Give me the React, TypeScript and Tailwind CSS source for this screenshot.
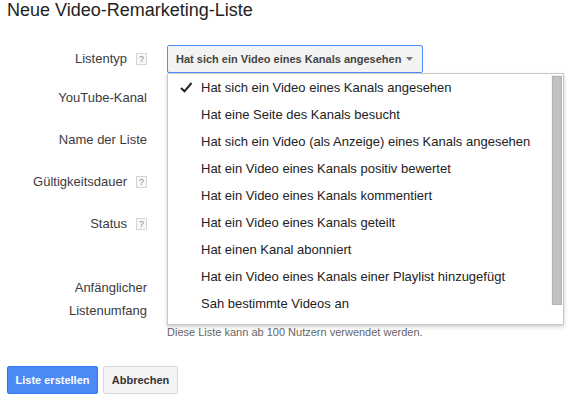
import React from "react";

const items = [
  "Hat sich ein Video eines Kanals angesehen",
  "Hat eine Seite des Kanals besucht",
  "Hat sich ein Video (als Anzeige) eines Kanals angesehen",
  "Hat ein Video eines Kanals positiv bewertet",
  "Hat ein Video eines Kanals kommentiert",
  "Hat ein Video eines Kanals geteilt",
  "Hat einen Kanal abonniert",
  "Hat ein Video eines Kanals einer Playlist hinzugefügt",
  "Sah bestimmte Videos an",
];

function Help() {
  return (
    <span className="ml-[9px] inline-flex h-[12px] w-[11px] items-center justify-center border border-[#d6d6d6] bg-[#f8f8f8] text-[9px] leading-none text-[#888]">
      ?
    </span>
  );
}

function Label({ text, help }: { text: string; help?: boolean }) {
  return (
    <div className="flex w-[147px] shrink-0 items-center justify-end text-[13px] leading-[16px] text-[#3c3c3c]">
      <span>{text}</span>
      {help && <Help />}
    </div>
  );
}

export default function App() {
  return (
    <div
      className="h-[400px] w-[573px] overflow-hidden bg-white px-[7px]"
      style={{ fontFamily: '"Liberation Sans", Arial, sans-serif' }}
    >
      <h1 className="text-[18px] leading-[20px] text-[#222]">Neue Video-Remarketing-Liste</h1>

      {/* Row 1 */}
      <div className="mt-[25px] flex h-[28px] items-center">
        <div className="-ml-[7px] flex">
          <Label text="Listentyp" help />
        </div>
        <div className="relative ml-[20px]">
          <div className="flex h-[28px] w-[256px] items-center justify-between rounded-[2px] border border-[#4d90fe] bg-[#f3f3f3] pl-[8px] pr-[8px] text-[11px] font-bold text-[#444]">
            <span>Hat sich ein Video eines Kanals angesehen</span>
            <svg width="7" height="4" viewBox="0 0 7 4" className="mr-[1px]">
              <path d="M0 0 L7 0 L3.5 4 Z" fill="#777" />
            </svg>
          </div>
          <div className="absolute left-0 top-[28px] z-10 h-[252px] w-[397px] border border-[#c8c8c8] bg-white pb-[7px] shadow-[0_2px_4px_rgba(0,0,0,0.2)]">
            {items.map((t, i) => (
              <div
                key={t}
                className="relative flex h-[27px] items-center pl-[33px] text-[13px] text-[#222]"
              >
                {i === 0 && (
                  <svg
                    width="13"
                    height="11"
                    viewBox="0 0 13 11"
                    className="absolute left-[12px] top-[8px]"
                  >
                    <path d="M1 6 L4.5 9.3 L11.5 1" fill="none" stroke="#222" strokeWidth="2" />
                  </svg>
                )}
                {t}
              </div>
            ))}
            <div className="absolute right-[1px] top-[1px] h-[230px] w-[11px] bg-[#f4f4f4] pl-[1px]">
              <div className="mt-[1px] h-[229px] w-[10px] border border-[#b3b3b3] bg-[#c1c1c1]" />
            </div>
          </div>
        </div>
      </div>

      {/* Labels */}
      <div className="-ml-[7px] mt-[17px] flex h-[16px]">
        <Label text="YouTube-Kanal" />
      </div>
      <div className="-ml-[7px] mt-[26px] flex h-[16px]">
        <Label text="Name der Liste" />
      </div>
      <div className="-ml-[7px] mt-[26px] flex h-[16px]">
        <Label text="Gültigkeitsdauer" help />
      </div>
      <div className="-ml-[7px] mt-[26px] flex h-[16px]">
        <Label text="Status" help />
      </div>
      <div className="-ml-[7px] mt-[44px] flex">
        <div className="w-[147px] shrink-0 text-right text-[13px] leading-[23px] text-[#3c3c3c]">
          Anfänglicher
          <br />
          Listenumfang
        </div>
        <div className="ml-[20px] pt-[49px] text-[11px] leading-[14px] text-[#666]">
          Diese Liste kann ab 100 Nutzern verwendet werden.
        </div>
      </div>

      {/* Buttons */}
      <div className="mt-[27px] flex gap-[5px]">
        <button className="h-[28px] w-[91px] rounded-[2px] border border-[#3079ed] bg-[#4a8af4] text-[11px] font-bold text-white">
          Liste erstellen
        </button>
        <button className="h-[28px] w-[75px] rounded-[2px] border border-[#d9d9d9] bg-[#f4f4f4] text-[11px] font-bold text-[#333]">
          Abbrechen
        </button>
      </div>
    </div>
  );
}
